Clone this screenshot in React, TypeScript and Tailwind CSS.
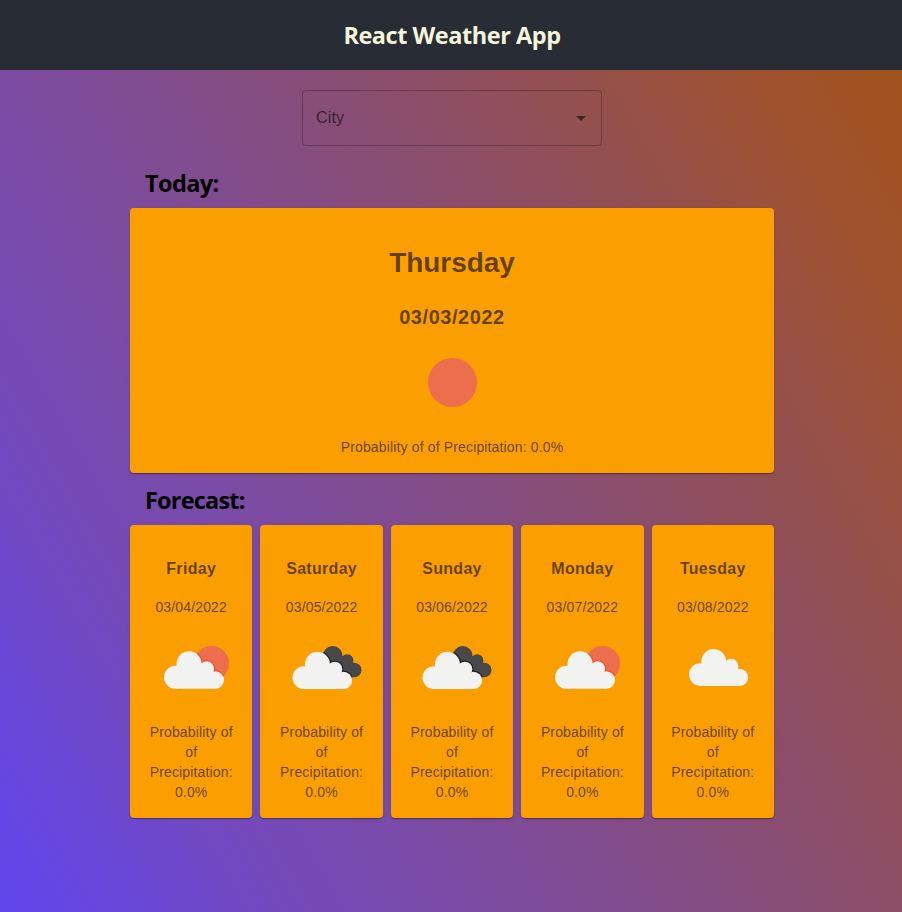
const orange = "bg-[#fb9f00]";
const shadow = "shadow-[0_2px_1px_-1px_rgba(0,0,0,0.2),0_1px_1px_0_rgba(0,0,0,0.14),0_1px_3px_0_rgba(0,0,0,0.12)]";
const card = `${orange} ${shadow} rounded text-center text-black/60 font-['Liberation_Sans',Arial,sans-serif] tracking-[0.15px]`;
const heading = "font-['Open_Sans','Noto_Sans',sans-serif] text-[23.500px] font-bold";

type Sky = "sun" | "few" | "broken" | "cloud";

function Cloud() {
  return (
    <>
      <circle cx="11.300" cy="25.600" r="11.300" />
      <circle cx="24.700" cy="12.400" r="12.400" />
      <circle cx="42" cy="17.200" r="7.400" />
      <circle cx="50.500" cy="28.300" r="8.600" />
      <path d="M11.300 20L20 14H40L46 20L51 24V36.900H11.300Z" />
    </>
  );
}

function SkyIcon({ kind }: { kind: Sky }) {
  return (
    <svg className="mx-auto block size-[100px] shrink-0" viewBox="0 0 100 100">
      {kind === "sun" && <circle cx="50.500" cy="49.500" r="24.500" fill="#ec6e4c" />}
      {kind === "few" && (
        <>
          <clipPath id="sun-disc">
            <circle cx="70.500" cy="31.600" r="17.600" />
          </clipPath>
          <circle cx="70.500" cy="31.600" r="17.600" fill="#ec6e4c" />
          <g clipPath="url(#sun-disc)">
            <g transform="translate(23 19.300) scale(1.015)" stroke="#f0481f" strokeWidth="2" fill="#f0481f">
              <Cloud />
            </g>
          </g>
          <g transform="translate(23 19.300) scale(1.015)" fill="#f2f2f0">
            <Cloud />
          </g>
        </>
      )}
      {kind === "broken" && (
        <>
          <clipPath id="dark-cloud">
            <circle cx="60.700" cy="24" r="9.900" />
            <circle cx="75.200" cy="28.400" r="6.200" />
            <circle cx="82.200" cy="38" r="7.300" />
            <path d="M54 24H70L75 31L82 38V45.300H60Z" />
          </clipPath>
          <g clipPath="url(#dark-cloud)">
            <rect x="45" y="10" width="50" height="40" fill="#48484a" />
            <g transform="translate(20.500 19.800) scale(1.008)" stroke="#202022" strokeWidth="2.400" fill="#202022">
              <Cloud />
            </g>
          </g>
          <g transform="translate(20.500 19.800) scale(1.008)" fill="#f2f2f0">
            <Cloud />
          </g>
        </>
      )}
      {kind === "cloud" && (
        <g transform="translate(26 17)" fill="#f2f2f0">
          <Cloud />
        </g>
      )}
    </svg>
  );
}

const days: { day: string; date: string; sky: Sky }[] = [
  { day: "Friday", date: "03/04/2022", sky: "few" },
  { day: "Saturday", date: "03/05/2022", sky: "broken" },
  { day: "Sunday", date: "03/06/2022", sky: "broken" },
  { day: "Monday", date: "03/07/2022", sky: "few" },
  { day: "Tuesday", date: "03/08/2022", sky: "cloud" },
];

export default function App() {
  return (
    <div className="flex h-[912px] flex-col bg-[linear-gradient(60deg,#6046ee_0%,#6a48d6_10%,#7349bb_20%,#7a4ba6_32%,#844d80_51%,#8d4e61_65%,#935050_73%,#a0522f_87%,#a0521c_97%)]">
      <header className="flex h-[70px] shrink-0 items-center justify-center bg-[#282c34] pt-[2px] pl-[2px] text-[#f5f5dc]">
        <h1 className={`${heading} whitespace-nowrap tracking-[-0.46px]`}>React Weather App</h1>
      </header>
      <main className="ml-[130px] flex w-[644px] flex-col">
        <div className="mx-auto mt-5 flex h-14 w-[300px] items-center justify-between rounded border border-black/25 pr-2 pl-[13px] font-['Liberation_Sans',Arial,sans-serif] text-base tracking-[0.15px] text-black/60">
          <span>City</span>
          <svg className="size-6 text-black/54" viewBox="0 0 24 24" fill="currentColor">
            <path d="M7 10l5 5 5-5z" />
          </svg>
        </div>
        <h2 className={`${heading} mt-[21px] h-[41px] pl-[15px] leading-[33px] tracking-[-0.6px] text-black`}>Today:</h2>
        <section className={`${card} h-[265px] pt-[38px]`}>
          <h2 className="text-[28px] leading-[34px] font-bold tracking-[-0.05px]">Thursday</h2>
          <h3 className="mt-5 text-[20px] leading-[34px] font-bold tracking-[0.55px]">03/03/2022</h3>
          <div className="-mt-px">
            <SkyIcon kind="sun" />
          </div>
          <p className="mt-1 text-sm leading-5">Probability of of Precipitation: 0.0%</p>
        </section>
        <h2 className={`${heading} h-[52px] pt-[11px] pl-[15px] leading-[33px] tracking-[-0.8px] text-black`}>Forecast:</h2>
        <section className="grid grid-cols-5 gap-2">
          {days.map((d) => (
            <article key={d.day} className={`${card} h-[293px] px-4 pt-[32px]`}>
              <h3 className="text-base leading-6 font-bold tracking-[0.3px]">{d.day}</h3>
              <p className="mt-4 text-sm leading-5">{d.date}</p>
              <div className="-mx-2 mt-[15px] flex justify-center">
                <SkyIcon kind={d.sky} />
              </div>
              <p className="mt-[-10px] text-sm leading-5">Probability of of Precipitation: 0.0%</p>
            </article>
          ))}
        </section>
      </main>
    </div>
  );
}
